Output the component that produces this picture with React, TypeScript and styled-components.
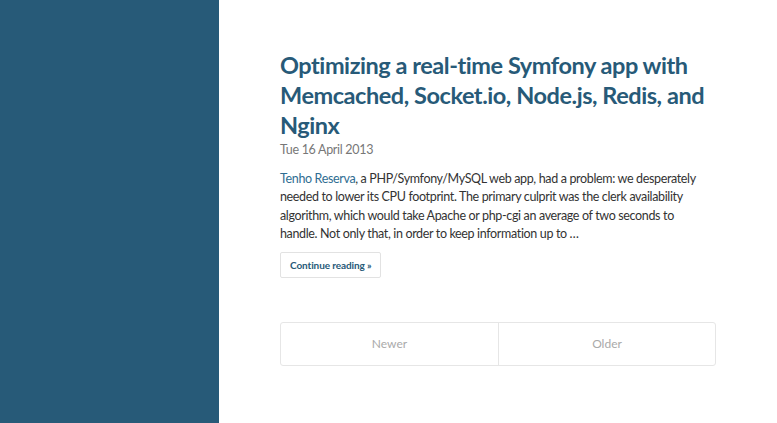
import React from "react";
import styled, { createGlobalStyle } from "styled-components";

const Global = createGlobalStyle`
  html, body { margin: 0; padding: 0; background: #fff; }
  body { font-family: "Lato", "Noto Sans", sans-serif; }
`;

const Page = styled.div`
  display: flex;
  min-height: 423px;
`;

const Sidebar = styled.aside`
  width: 219px;
  flex-shrink: 0;
  background: #275a78;
`;

const Main = styled.main`
  flex: 1;
  padding: 50px 61px 0 61px;
  max-width: 436px;
`;

const Title = styled.h1`
  margin: 0;
  font-size: 23.5px;
  line-height: 30px;
  font-weight: 700;
  color: #275a78;
  letter-spacing: -0.45px;
`;

const DateLine = styled.div`
  margin-top: 2px;
  font-size: 12.5px;
  color: #777;
  letter-spacing: -0.3px;
`;

const Excerpt = styled.p`
  margin: 13px 0 0;
  max-width: 420px;
  font-size: 12.5px;
  line-height: 18.4px;
  color: #333;
  letter-spacing: -0.35px;
`;

const Link = styled.a`
  color: #2f6d92;
  text-decoration: none;
`;

const ReadMore = styled.a`
  display: inline-flex;
  align-items: center;
  margin-top: 8px;
  height: 24px;
  padding: 0 9px;
  border: 1px solid #e2e2e2;
  border-radius: 2px;
  font-size: 10px;
  font-weight: 700;
  color: #275a78;
  text-decoration: none;
  letter-spacing: -0.1px;
`;

const Pager = styled.nav`
  margin-top: 44px;
  display: grid;
  grid-template-columns: 1fr 1fr;
  height: 42px;
  border: 1px solid #e6e6e6;
  border-radius: 3px;
`;

const PagerItem = styled.span<{ $divider?: boolean }>`
  display: flex;
  align-items: center;
  justify-content: center;
  font-size: 12px;
  color: #aaa;
  ${(p) => (p.$divider ? "border-left: 1px solid #e6e6e6;" : "")}
`;

export default function App() {
  return (
    <>
      <Global />
      <Page>
        <Sidebar />
        <Main>
          <Title>
            Optimizing a real-time Symfony app with Memcached, Socket.io,
            Node.js, Redis, and Nginx
          </Title>
          <DateLine>Tue 16 April 2013</DateLine>
          <Excerpt>
            <Link href="#">Tenho Reserva</Link>, a PHP/Symfony/MySQL web app,
            had a problem: we desperately needed to lower its CPU footprint.
            The primary culprit was the clerk availability algorithm, which
            would take Apache or php-cgi an average of two seconds to handle.
            Not only that, in order to keep information up to …
          </Excerpt>
          <ReadMore href="#">Continue reading »</ReadMore>
          <Pager>
            <PagerItem>Newer</PagerItem>
            <PagerItem $divider>Older</PagerItem>
          </Pager>
        </Main>
      </Page>
    </>
  );
}
